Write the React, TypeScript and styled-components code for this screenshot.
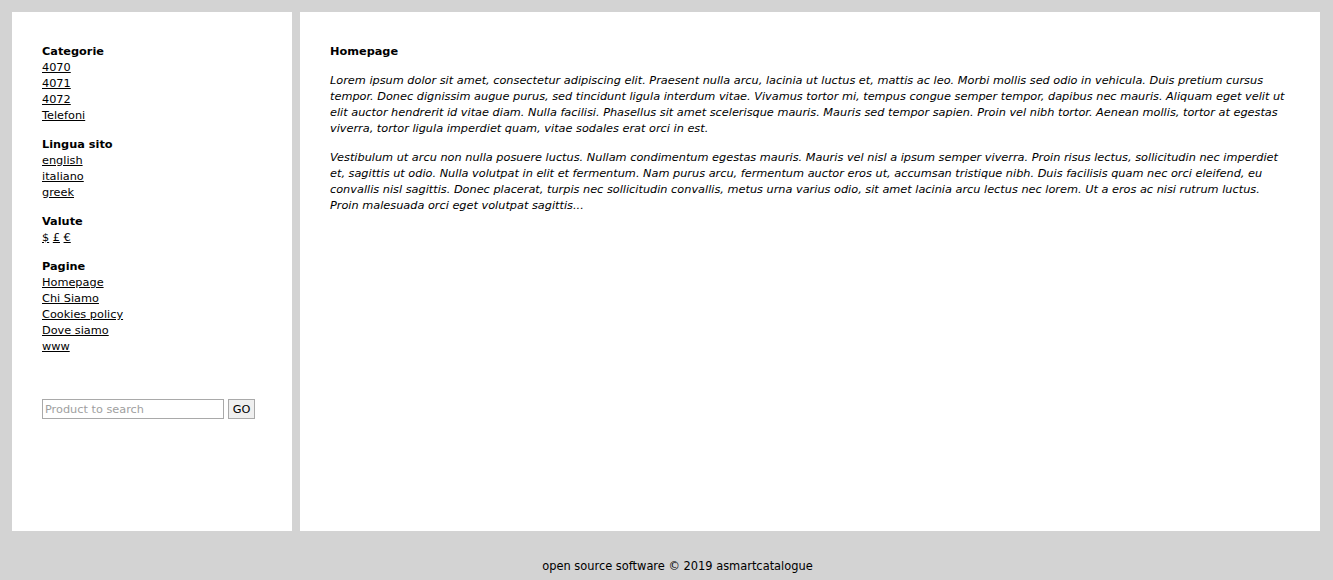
import styled, { createGlobalStyle } from "styled-components";

const GlobalStyle = createGlobalStyle`
  body {
    margin: 0;
    background-color: #d3d3d3;
    font-family: "DejaVu Sans", Verdana, sans-serif;
    font-size: 11.3px;
    line-height: 16px;
    color: #000;
  }
`;

const Page = styled.div`
  display: flex;
  gap: 8px;
  padding: 12px 13px 0 12px;
  height: 519px;
`;

const Sidebar = styled.aside`
  width: 220px;
  flex-shrink: 0;
  background-color: #fff;
  padding: 32px 30px 28px;
`;

const Main = styled.main`
  flex: 1;
  background-color: #fff;
  padding: 32px 30px 28px;
`;

const Section = styled.div`
  margin-bottom: 13px;
`;

const Heading = styled.div`
  font-weight: bold;
`;

const NavLink = styled.a`
  display: block;
  color: #000;
  text-decoration: underline;
`;

const InlineLink = styled.a`
  color: #000;
  text-decoration: underline;
`;

const SearchForm = styled.form`
  display: flex;
  gap: 4px;
  margin-top: 44px;
`;

const SearchInput = styled.input`
  width: 182px;
  height: 20px;
  box-sizing: border-box;
  border: 1px solid #a9a9a9;
  padding: 0 2px;
  font-family: "DejaVu Sans", Verdana, sans-serif;
  font-size: 11.3px;
  &::placeholder {
    color: #a0a0a0;
  }
`;

const GoButton = styled.button`
  height: 20px;
  width: 27px;
  padding: 0;
  border: 1px solid #a9a9a9;
  background-color: #efefef;
  font-family: "DejaVu Sans", Verdana, sans-serif;
  font-size: 11.3px;
  color: #000;
`;

const Title = styled.div`
  font-weight: bold;
  margin-bottom: 13px;
`;

const Paragraph = styled.p`
  font-style: italic;
  margin: 0 0 13px;
`;

const Footer = styled.footer`
  height: 49px;
  display: flex;
  align-items: center;
  justify-content: center;
  padding-left: 22px;
  padding-top: 20px;
  box-sizing: border-box;
  font-family: "Liberation Sans Narrow", "DejaVu Sans Condensed", sans-serif;
  font-size: 12.7px;
`;

const categories = ["4070", "4071", "4072", "Telefoni"];
const languages = ["english", "italiano", "greek"];
const pages = ["Homepage", "Chi Siamo", "Cookies policy", "Dove siamo", "www"];

function App() {
  return (
    <>
      <GlobalStyle />
      <Page>
        <Sidebar>
          <Section>
            <Heading>Categorie</Heading>
            {categories.map((c) => (
              <NavLink key={c} href="#">
                {c}
              </NavLink>
            ))}
          </Section>
          <Section>
            <Heading>Lingua sito</Heading>
            {languages.map((l) => (
              <NavLink key={l} href="#">
                {l}
              </NavLink>
            ))}
          </Section>
          <Section>
            <Heading>Valute</Heading>
            <InlineLink href="#">$</InlineLink> <InlineLink href="#">£</InlineLink>{" "}
            <InlineLink href="#">€</InlineLink>
          </Section>
          <Section>
            <Heading>Pagine</Heading>
            {pages.map((p) => (
              <NavLink key={p} href="#">
                {p}
              </NavLink>
            ))}
          </Section>
          <SearchForm onSubmit={(e) => e.preventDefault()}>
            <SearchInput placeholder="Product to search" />
            <GoButton type="submit">GO</GoButton>
          </SearchForm>
        </Sidebar>
        <Main>
          <Title>Homepage</Title>
          <Paragraph>
            Lorem ipsum dolor sit amet, consectetur adipiscing elit. Praesent nulla arcu, lacinia ut
            luctus et, mattis ac leo. Morbi mollis sed odio in vehicula. Duis pretium cursus tempor.
            Donec dignissim augue purus, sed tincidunt ligula interdum vitae. Vivamus tortor mi,
            tempus congue semper tempor, dapibus nec mauris. Aliquam eget velit ut elit auctor
            hendrerit id vitae diam. Nulla facilisi. Phasellus sit amet scelerisque mauris. Mauris
            sed tempor sapien. Proin vel nibh tortor. Aenean mollis, tortor at egestas viverra,
            tortor ligula imperdiet quam, vitae sodales erat orci in est.
          </Paragraph>
          <Paragraph>
            Vestibulum ut arcu non nulla posuere luctus. Nullam condimentum egestas mauris. Mauris
            vel nisl a ipsum semper viverra. Proin risus lectus, sollicitudin nec imperdiet et,
            sagittis ut odio. Nulla volutpat in elit et fermentum. Nam purus arcu, fermentum auctor
            eros ut, accumsan tristique nibh. Duis facilisis quam nec orci eleifend, eu convallis
            nisl sagittis. Donec placerat, turpis nec sollicitudin convallis, metus urna varius
            odio, sit amet lacinia arcu lectus nec lorem. Ut a eros ac nisi rutrum luctus. Proin
            malesuada orci eget volutpat sagittis...
          </Paragraph>
        </Main>
      </Page>
      <Footer>open source software © 2019 asmartcatalogue</Footer>
    </>
  );
}

export default App;
